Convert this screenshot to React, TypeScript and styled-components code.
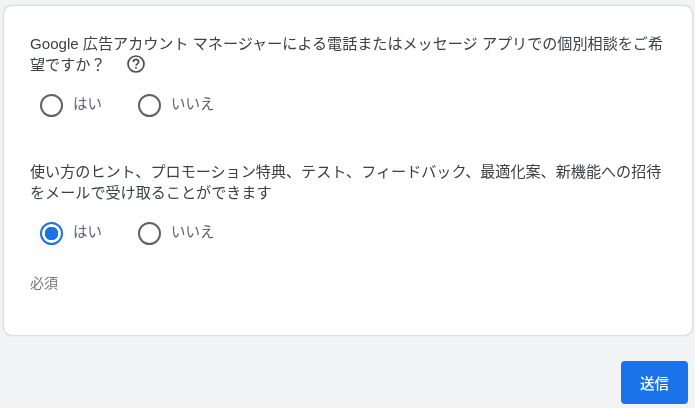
import styled, { createGlobalStyle } from "styled-components"

const GlobalStyle = createGlobalStyle`
  html, body {
    margin: 0;
    padding: 0;
    background: #f1f3f4;
  }
  body {
    font-family: "Liberation Sans", "Noto Sans CJK JP", sans-serif;
    color: #3c4043;
  }
`

type RadioOption = { label: string; checked?: boolean }

const RadioGroup = ({ options }: { options: RadioOption[] }) => (
  <Options>
    {options.map((option) => (
      <Option key={option.label}>
        <RadioCircle $checked={option.checked} />
        <OptionLabel>{option.label}</OptionLabel>
      </Option>
    ))}
  </Options>
)

const HelpIcon = () => (
  <HelpSvg viewBox="0 0 24 24" aria-hidden="true">
    <circle cx="12" cy="12" r="9.6" fill="none" stroke="#4a4d50" strokeWidth="2" />
    <path
      d="M8.8 9.6a3.2 3.2 0 0 1 6.4 0c0 2.2-3.2 2.3-3.2 4.6"
      fill="none"
      stroke="#4a4d50"
      strokeWidth="2"
    />
    <rect x="11" y="15.6" width="2" height="2" fill="#4a4d50" />
  </HelpSvg>
)

const App = () => {
  return (
    <Page>
      <GlobalStyle />
      <Card>
        <Question>
          Google 広告アカウント マネージャーによる電話またはメッセージ アプリでの個別相談をご希
          <br />
          望ですか？
          <HelpIcon />
        </Question>
        <RadioGroup options={[{ label: "はい" }, { label: "いいえ" }]} />
        <SecondQuestion>
          使い方のヒント、プロモーション特典、テスト、フィードバック、最適化案、新機能への招待
          <br />
          をメールで受け取ることができます
        </SecondQuestion>
        <RadioGroup options={[{ label: "はい", checked: true }, { label: "いいえ" }]} />
        <Required>必須</Required>
      </Card>
      <Footer>
        <SubmitButton>送信</SubmitButton>
      </Footer>
    </Page>
  )
}

export default App

const Page = styled.div`
  width: 695px;
  height: 408px;
  overflow: hidden;
  box-sizing: border-box;
  padding: 6px 3px 0 4px;
  filter: blur(0.7px);
`

const Card = styled.div`
  box-sizing: border-box;
  height: 329px;
  padding: 27px 26px 0;
  background: #ffffff;
  border-radius: 8px;
  box-shadow: 0 0 2px rgba(60, 64, 67, 0.45);
`

const Question = styled.div`
  font-size: 15.1px;
  line-height: 21px;
  white-space: nowrap;
  margin-bottom: -2px;
`

const SecondQuestion = styled(Question)`
  margin-top: 44px;
`

const HelpSvg = styled.svg`
  width: 20px;
  height: 20px;
  margin: -4px 0 -4px 21px;
  vertical-align: 0;
`

const Options = styled.div`
  display: flex;
  gap: 36px;
  margin-top: 20px;
  padding-left: 10px;
`

const Option = styled.div`
  display: flex;
  align-items: center;
  gap: 10px;
  height: 24px;
`

const RadioCircle = styled.span<{ $checked?: boolean }>`
  box-sizing: border-box;
  width: 23px;
  height: 23px;
  border-radius: 50%;
  border: 2.5px solid ${({ $checked }) => ($checked ? "#1a73e8" : "#5f6368")};
  background: ${({ $checked }) =>
    $checked ? "radial-gradient(circle, #1a73e8 0 6.5px, #ffffff 7px)" : "#ffffff"};
`

const OptionLabel = styled.span`
  font-size: 14.5px;
  line-height: 20px;
  padding-bottom: 3px;
  color: #5f6368;
`

const Required = styled.div`
  margin-top: 30px;
  font-size: 14px;
  line-height: 16px;
  color: #70757a;
`

const Footer = styled.div`
  display: flex;
  justify-content: flex-end;
  padding: 26px 4px 0 0;
`

const SubmitButton = styled.button`
  width: 67px;
  height: 43px;
  border: 0;
  border-radius: 4px;
  background: #1a73e8;
  color: #ffffff;
  font-family: inherit;
  font-size: 14.5px;
  font-weight: 500;
`
